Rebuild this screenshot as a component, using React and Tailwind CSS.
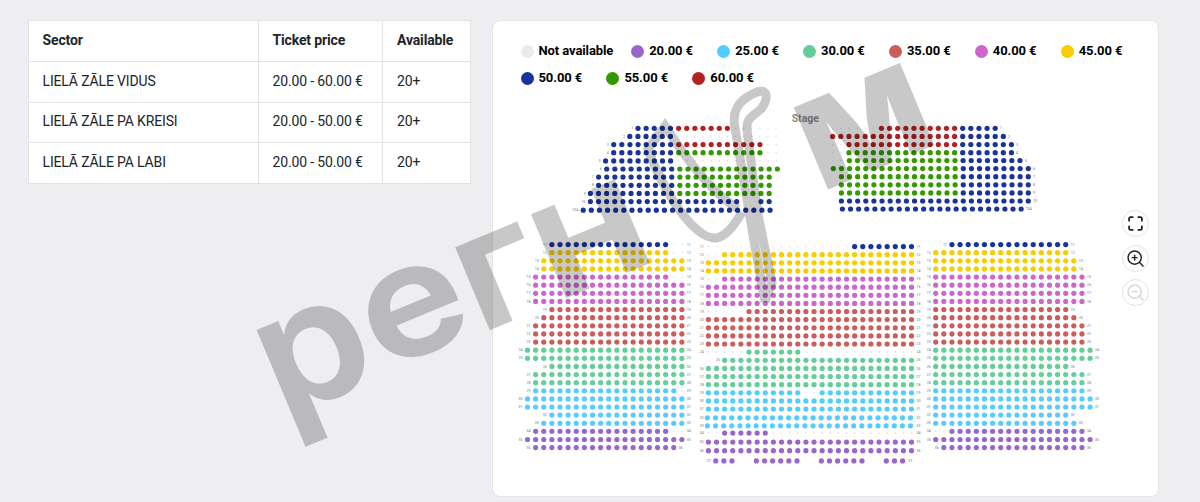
import { Maximize } from 'lucide-react';

const sectors = [
  { name: 'LIELĀ ZĀLE VIDUS', price: '20.00 - 60.00 €', available: '20+' },
  { name: 'LIELĀ ZĀLE PA KREISI', price: '20.00 - 50.00 €', available: '20+' },
  { name: 'LIELĀ ZĀLE PA LABI', price: '20.00 - 50.00 €', available: '20+' },
];

const legend = [
  { label: 'Not available', color: 'bg-[#ebebeb]' },
  { label: '20.00 €', color: 'bg-[#9966cc]' },
  { label: '25.00 €', color: 'bg-[#55ccff]' },
  { label: '30.00 €', color: 'bg-[#66cc99]' },
  { label: '35.00 €', color: 'bg-[#cd5c5c]' },
  { label: '40.00 €', color: 'bg-[#cc66cc]' },
  { label: '45.00 €', color: 'bg-[#f8cc00]' },
  { label: '50.00 €', color: 'bg-[#1a3399]' },
  { label: '55.00 €', color: 'bg-[#339900]' },
  { label: '60.00 €', color: 'bg-[#b22222]' },
];

const seatColors = {
  v: '#9966cc',
  c: '#55ccff',
  m: '#66cc99',
  o: '#cd5c5c',
  p: '#cc66cc',
  y: '#f8cc00',
  b: '#1a3399',
  g: '#339900',
  r: '#b22222',
};

const PITCH = 8.125;

// Row: [label, y, x of first seat, seats, left label x, right label x]
// Seats are runs like "b5 r7 .6"; "." is a taken seat, "_" is an empty place.
const balconyLeft = [
  ['1', 128.3, 638, 'b5 r7 .6', 632.3],
  ['2', 136.4, 629.8, 'b6 .13', 624],
  ['3', 144.6, 613.7, 'b8 r11 .2', 607.7],
  ['4', 152.7, 613.7, 'b8 g11 .2', 607.7],
  ['5', 160.9, 605.6, 'b9 .13', 599.7],
  ['6', 169, 606.7, 'b9 g13', 600.7],
  ['7', 177.1, 598.6, 'b10 g12', 592.7],
  ['8', 185.3, 598.6, 'b10 g12', 592.7],
  ['9', 193.4, 590.4, 'b11 g12', 584.7],
  ['10', 201.6, 590.4, 'b19 _2 b2', 583.5],
  ['10A', 210.2, 583.2, 'b24', 575.3],
];

const balconyRight = [
  ['1', 128.3, 832.7, '.6 r10 b5', null, 1001],
  ['2', 136.4, 832.7, 'r16 b6', null, 1009],
  ['3', 144.6, 832.7, '.2 r14 b7', null, 1017],
  ['4', 152.7, 832.7, '.2 g14 b7', null, 1017],
  ['5', 160.5, 833.1, '.2 g14 b8', null, 1026],
  ['6', 168.6, 833.3, 'g16 b9', null, 1034],
  ['7', 176.7, 841.4, 'g15 b9', null, 1034],
  ['8', 184.8, 841.4, 'g15 b9', null, 1034],
  ['9', 192.9, 841.4, 'g15 b9', null, 1034],
  ['10', 201, 841.4, 'b24', null, 1035],
  ['10A', 209, 842.4, 'b23', null, 1029],
];

const leftRows = [
  [3, 'b15 .2'], [3, 'y15 .2'], [2, 'y18'], [2, 'y18'], [1, 'p17 .2'], [1, 'p19'], [1, 'p19'],
  [1, 'p19'], [3, 'o17'], [2, 'o18'], [1, 'o19'], [1, 'o19'], [1, 'o19'], [0, 'm20'], [0, 'm20'],
  [3, 'm17'], [1, 'm19'], [1, 'm19'], [1, 'c18 .1'], [0, 'c20'], [0, 'c20'], [3, 'c17'],
  [2, 'c18'], [1, 'v17 .2'], [0, 'v20'], [1, 'v18'],
].map(([start, seats], i) => {
  const x = 527.5 + start * PITCH;
  return [String(i + 11), 244.6 + i * 8.12, x, seats, x - 7, i === 25 ? 680.7 : 688.7];
});

const rightRows = [
  [2, 15, 'b15'], [0, 17, 'y17'], [0, 18, 'y18'], [0, 18, 'y18'], [0, 19, 'p19'], [0, 19, 'p19'],
  [0, 19, 'p19'], [0, 19, 'p19'], [0, 17, 'o17'], [0, 18, 'o18'], [0, 19, 'o19'], [0, 19, 'o19'],
  [0, 19, 'o19'], [0, 20, 'm20'], [0, 20, 'm20'], [0, 17, 'm17'], [0, 19, 'm19'], [0, 19, 'm19'],
  [0, 19, 'c19'], [0, 20, 'c20'], [0, 20, 'c20'], [0, 17, 'c17'], [0, 18, 'c18'],
  [0, 19, '.2 v17'], [0, 20, 'v20'], [1, 18, 'v18'],
].map(([start, count, seats], i) => {
  const x = 935.7 + start * PITCH;
  return [String(i + 11), 244.6 + i * 8.12, x, seats, x - 7, x + (count - 1) * PITCH + 7];
});

const centerRows = [
  [246.6, '.18 b8'], [254.7, '.2 y24'], [262.8, 'y26'], [270.9, 'y26'], [279.1, '.2 p24'],
  [287.2, 'p26'], [295.3, 'p26'], [303.4, 'p26'], [311.5, '.5 o21'], [319.6, 'o26'],
  [327.8, 'o26'], [335.9, 'o26'], [344, 'o26'], [352.1, '.5 m7 .14'], [360.3, '_2 m24'],
  [368.4, 'm26'], [376.5, 'm26'], [384.7, 'm26'], [392.8, 'c12 .2 c12'], [400.9, 'c26'],
  [409, 'c26'], [417.8, 'c26'], [425.8, 'c26'], [433.1, '.2 v6 .18'], [442.1, 'v26'],
  [450.7, 'v26'], [460.9, '_1 v3 _2 v6 _2 v6 _2 v3'],
].map(([y, seats], i) => {
  const left = i === 14 ? 717.7 : i === 26 ? 708.7 : 701.7;
  const x = i === 21 || i === 22 ? 707.4 : i === 26 ? 707.6 : 708.4;
  return [String(i + 11), y, x, seats, left, i === 26 ? 910.3 : 918.6];
});

const rows = [...balconyLeft, ...balconyRight, ...leftRows, ...centerRows, ...rightRows];

function expand(seats) {
  return seats.split(' ').flatMap((run) => Array(Number(run.slice(1))).fill(run[0]));
}

function SeatRow({ row }) {
  const [label, y, x, seats, left, right] = row;
  return (
    <g>
      {left && <text x={left} y={y + 1.1}>{label}</text>}
      {expand(seats).map((seat, i) => {
        if (seat === '_') return null;
        return (
          <circle
            key={i}
            cx={x + i * PITCH}
            cy={y}
            r={seat === '.' ? 0.8 : 2.6}
            fill={seatColors[seat] || '#dedede'}
          />
        );
      })}
      {right && <text x={right} y={y + 1.1}>{label}</text>}
    </g>
  );
}

function SeatMap() {
  return (
    <svg viewBox="493 100 665 395" className="block h-[395px] w-[665px]">
      <text x="805.3" y="122" textAnchor="middle" className="fill-[#8a8a8a] text-[10.5px] font-bold">
        Stage
      </text>
      <g textAnchor="middle" className="fill-[#777] text-[3.6px]">
        {rows.map((row, i) => (
          <SeatRow key={i} row={row} />
        ))}
      </g>
    </svg>
  );
}

function Watermark() {
  return (
    <svg
      viewBox="0 0 1200 502"
      className="pointer-events-none absolute inset-0 h-[502px] w-[1200px] overflow-visible opacity-[0.21]"
    >
      <g stroke="black" strokeWidth="1.5" className="font-['Inter'] text-[162px] font-semibold">
        <text transform="translate(282 419) rotate(-22.7) scale(1.08 1.03)">р</text>
        <text transform="translate(382 371) rotate(-22.7) scale(1.09 0.96)">е</text>
        <text transform="translate(479 334) rotate(-22.7) scale(1.12 1)">г</text>
        <text transform="translate(555 302) rotate(-22.7) scale(1.15 1.01)">н</text>
        <text transform="translate(819 192.5) rotate(-22.7) scale(1.02 0.99)" className="font-bold">м</text>
      </g>
      <g fill="none" stroke="black" strokeWidth="9">
        <path d="M738 209C716 195 690 165 665 126L648 149C658 178 676 208 690 223C711 245 724 244 742 212M765 302L753 235L735 128C731 108 742 98 757 92C769 88 768 100 761 109C752 117 746 118 747 130L758 215L772 283L765 302" />
      </g>
    </svg>
  );
}

function ZoomIcon({ plus }) {
  return (
    <svg viewBox="0 0 16 16" fill="none" stroke="currentColor" strokeWidth="1.35" className="size-[17px]">
      <circle cx="7.2" cy="7.2" r="6.2" />
      <path d="M11.6 11.6L15.5 15.5M4.4 7.2h5.6" />
      {plus && <path d="M7.2 4.4v5.6" />}
    </svg>
  );
}

function MapButton({ children, disabled }) {
  return (
    <button
      disabled={disabled}
      className="flex size-[27px] items-center justify-center rounded-full border border-[#e2e2e2] bg-white text-[#222] disabled:text-[#d6d6d6]"
    >
      {children}
    </button>
  );
}

export default function App() {
  return (
    <div className="relative flex h-[502px] w-[1200px] items-start bg-[#eeeef0] pt-5 pl-[27.5px] font-['Roboto',sans-serif] text-[#212529]">
      <table className="w-[443.5px] table-fixed border-collapse bg-white text-left text-sm tracking-[-0.15px]">
        <thead>
          <tr className="h-[41px]">
            <th className="w-[230px] border border-[#e2e2e4] px-3.5 pb-0.5 font-bold">Sector</th>
            <th className="w-[124.5px] border border-[#e2e2e4] px-3.5 pb-0.5 font-bold">Ticket price</th>
            <th className="border border-[#e2e2e4] px-3.5 pb-0.5 font-bold">Available</th>
          </tr>
        </thead>
        <tbody>
          {sectors.map((sector) => (
            <tr key={sector.name} className="h-[40.5px]">
              <td className="border border-[#e2e2e4] px-3.5 pb-0.5">{sector.name}</td>
              <td className="border border-[#e2e2e4] px-3.5 pb-0.5">{sector.price}</td>
              <td className="border border-[#e2e2e4] px-3.5 pb-0.5">{sector.available}</td>
            </tr>
          ))}
        </tbody>
      </table>

      <div className="relative ml-[21px] h-[477px] w-[667px] rounded-lg border border-[#e4e4e6] bg-white">
        <div className="flex h-[79px] flex-wrap content-start gap-x-[18px] gap-y-[7px] pt-5 pl-[27.5px]">
          {legend.map((item) => (
            <div key={item.label} className="flex h-5 min-w-[67.9px] items-center gap-[5px] text-[13px] font-bold tracking-[-0.1px] text-black">
              <span className={`size-[13px] rounded-full ${item.color}`} />
              {item.label}
            </div>
          ))}
        </div>
        <SeatMap />
        <div className="absolute top-[189px] right-[9px] flex flex-col gap-[7.5px]">
          <MapButton>
            <Maximize size={17} strokeWidth={2.6} />
          </MapButton>
          <MapButton>
            <ZoomIcon plus />
          </MapButton>
          <MapButton disabled>
            <ZoomIcon />
          </MapButton>
        </div>
      </div>
      <Watermark />
    </div>
  );
}
